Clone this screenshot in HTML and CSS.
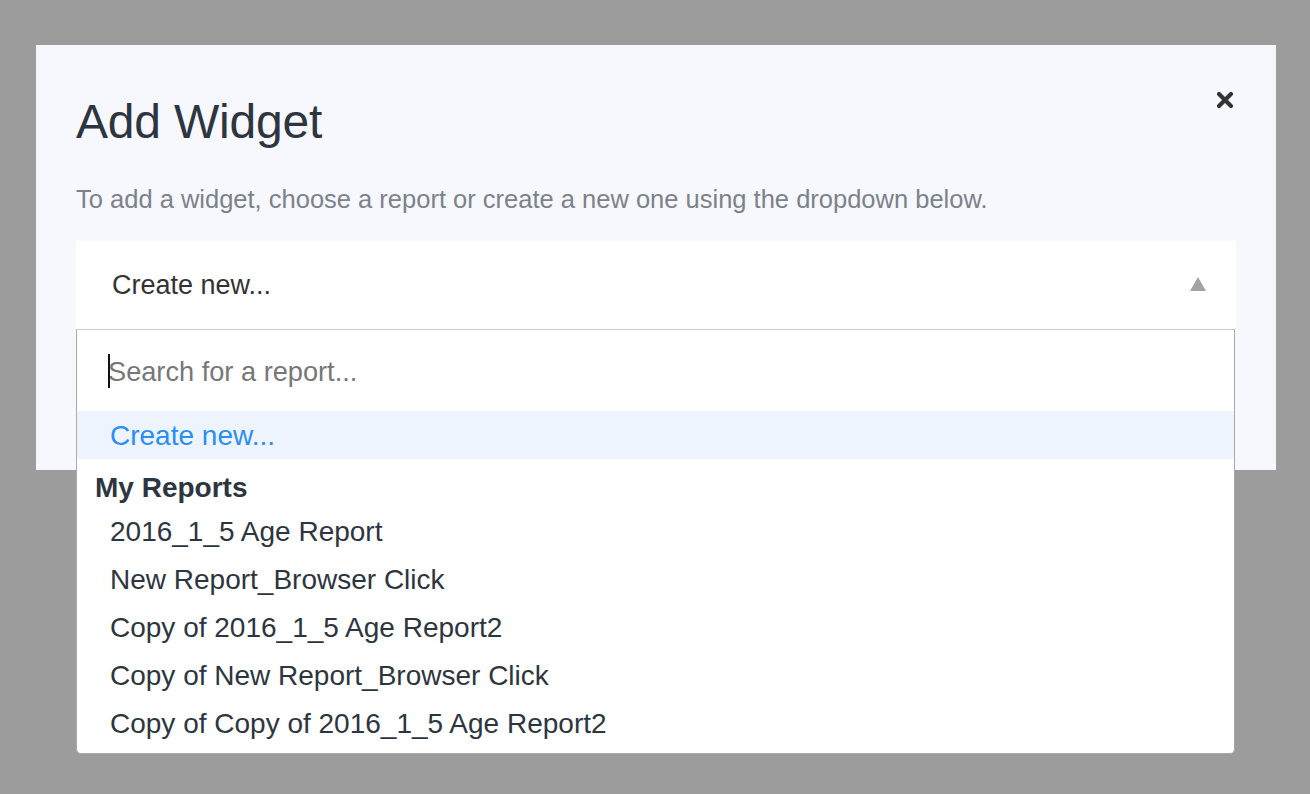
FILE: index.html
```html
<!DOCTYPE html>
<html>
<head>
<meta charset="utf-8">
<link rel="stylesheet" href="styles.css">
</head>
<body>
<div class="modal">
  <button class="close" aria-label="Close">
    <svg width="18" height="18" viewBox="0 0 18 18"><path d="M3 3 L15 15 M15 3 L3 15" stroke="#333" stroke-width="4.2" stroke-linecap="round"/></svg>
  </button>
  <h1 class="title">Add Widget</h1>
  <p class="subtitle">To add a widget, choose a report or create a new one using the dropdown below.</p>
  <div class="select">
    <div class="select-control">
      <span class="select-value">Create new...</span>
      <span class="arrow"></span>
    </div>
    <div class="menu">
      <div class="search"><span class="caret"></span><span class="placeholder">Search for a report...</span></div>
      <div class="option active">Create new...</div>
      <div class="group">My Reports</div>
      <div class="option">2016_1_5 Age Report</div>
      <div class="option">New Report_Browser Click</div>
      <div class="option">Copy of 2016_1_5 Age Report2</div>
      <div class="option">Copy of New Report_Browser Click</div>
      <div class="option">Copy of Copy of 2016_1_5 Age Report2</div>
    </div>
  </div>
</div>
</body>
</html>
```

FILE: styles.css
```css
html, body {
  margin: 0;
  padding: 0;
}
body {
  background: #9c9c9c;
  font-family: "Liberation Sans", Arial, sans-serif;
  width: 1310px;
  height: 794px;
  overflow: hidden;
}
.modal {
  position: relative;
  margin: 45px 0 0 36px;
  width: 1240px;
  height: 425px;
  box-sizing: border-box;
  padding: 0 40px;
  background: #f6f8fd;
}
.close {
  position: absolute;
  top: 46px;
  right: 42px;
  border: 0;
  padding: 0;
  background: none;
  width: 18px;
  height: 18px;
  display: block;
}
.close svg { display: block; }
.title {
  margin: 0;
  padding-top: 49px;
  font-size: 48px;
  font-weight: normal;
  line-height: 56px;
  color: #2d3540;
  letter-spacing: -0.2px;
}
.subtitle {
  margin: 34px 0 0 0;
  font-size: 25.5px;
  line-height: 30px;
  color: #7c828a;
}
.select {
  position: relative;
  margin-top: 27px;
}
.select-control {
  height: 88px;
  background: #fff;
  display: flex;
  align-items: center;
  justify-content: space-between;
  padding: 0 30px 0 36px;
}
.select-value {
  font-size: 27px;
  color: #333;
}
.arrow {
  width: 0;
  height: 0;
  border-left: 8px solid transparent;
  border-right: 8px solid transparent;
  border-bottom: 14px solid #a3a3a3;
  margin-top: -2px;
}
.menu {
  position: absolute;
  left: 0;
  top: 88px;
  width: 1159px;
  box-sizing: border-box;
  background: #fff;
  border: 1px solid #a9a9a9;
  border-top-color: #cbcbcb;
  border-radius: 0 0 5px 5px;
  padding-bottom: 6px;
}
.search {
  height: 81px;
  display: flex;
  align-items: center;
  padding-left: 31px;
  position: relative;
}
.caret {
  position: absolute;
  left: 31px;
  top: 24px;
  width: 2px;
  height: 34px;
  background: #111;
}
.placeholder {
  font-size: 27.2px;
  color: #777;
  margin-top: 2px;
}
.option {
  height: 48px;
  line-height: 50px;
  padding-left: 33px;
  font-size: 28px;
  color: #2d3540;
  white-space: nowrap;
}
.option.active {
  background: #eef4fe;
  color: #2b8ef2;
}
.group {
  height: 48px;
  line-height: 58px;
  padding-left: 18px;
  font-size: 28px;
  font-weight: bold;
  color: #2d3540;
}
```
